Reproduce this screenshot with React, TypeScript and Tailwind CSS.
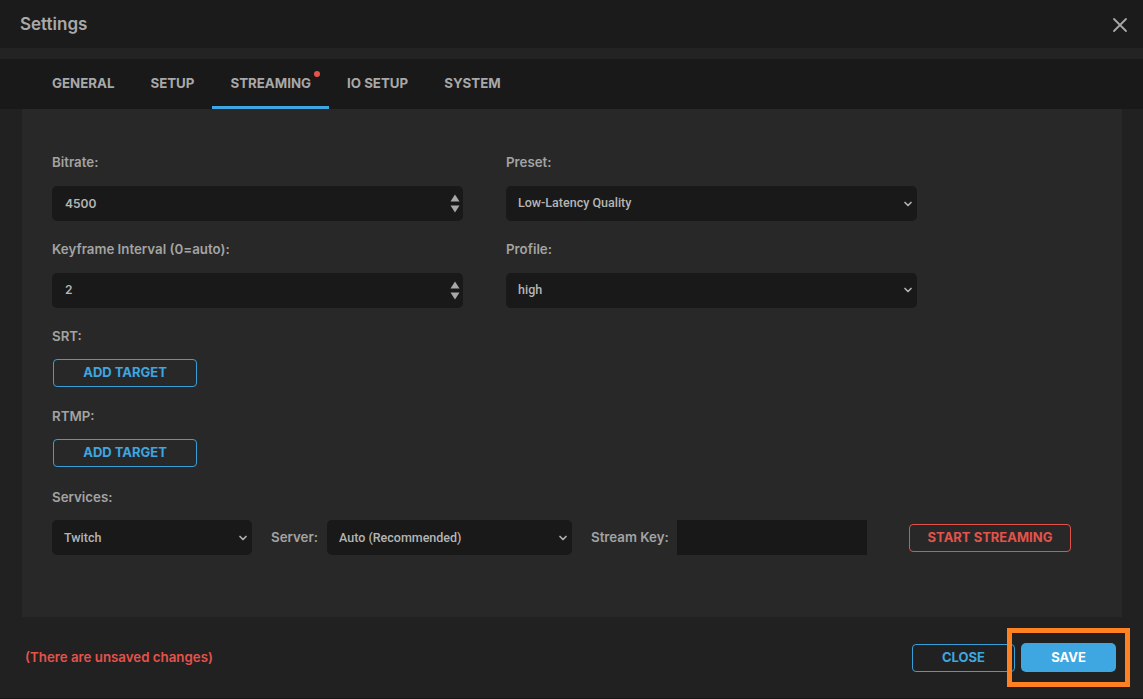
import React from "react";

const Chevron = () => (
  <svg width="10" height="10" viewBox="0 0 10 10" className="shrink-0">
    <path d="M2 3.5 L5 6.5 L8 3.5" fill="none" stroke="#b0b0b0" strokeWidth="1.7" strokeLinecap="round" strokeLinejoin="round" />
  </svg>
);

const Spinner = () => (
  <div className="flex flex-col items-center gap-[3px]">
    <svg width="10" height="8" viewBox="0 0 10 8"><path d="M5 0.5 L9.5 7.5 L0.5 7.5 Z" fill="#a8a8a8" /></svg>
    <svg width="10" height="8" viewBox="0 0 10 8"><path d="M0.5 0.5 L9.5 0.5 L5 7.5 Z" fill="#a8a8a8" /></svg>
  </div>
);

const Label = ({ children }: { children: React.ReactNode }) => (
  <div className="text-[13.3px] font-semibold text-[#a3a3a3] leading-none">{children}</div>
);

const NumberField = ({ value }: { value: string }) => (
  <div className="h-[35px] w-[411px] rounded-[5px] bg-[#191919] flex items-center justify-between pl-[13px] pr-[3px]">
    <span className="text-[12px] font-semibold text-[#b5b5b5]">{value}</span>
    <Spinner />
  </div>
);

const SelectField = ({ value, w }: { value: string; w: string }) => (
  <div className={`h-[35px] ${w} rounded-[5px] bg-[#191919] flex items-center justify-between pl-[12px] pr-[4px]`}>
    <span className="text-[12.5px] font-medium text-[#b5b5b5]" style={{ fontFamily: "Roboto, sans-serif" }}>{value}</span>
    <Chevron />
  </div>
);

const OutlineButton = ({ children, w, color }: { children: React.ReactNode; w: string; color: "blue" | "red" }) => (
  <div
    className={`h-[28px] ${w} rounded-[4px] border flex items-center justify-center text-[13px] font-bold ${
      color === "blue" ? "border-[#3a9fd8] text-[#3ea6e0]" : "border-[#e0534a] text-[#e3534b]"
    }`}
  >
    {children}
  </div>
);

export default function App() {
  const tabs = ["GENERAL", "SETUP", "STREAMING", "IO SETUP", "SYSTEM"];
  return (
    <div className="w-[1143px] h-[699px] flex flex-col bg-[#1b1b1b] overflow-hidden" style={{ fontFamily: "Inter, 'Noto Sans', sans-serif" }}>
      {/* Header */}
      <div className="h-[48px] shrink-0 flex items-center justify-between pl-[20px] pr-[15px] pt-[1px] bg-[#1b1b1b]">
        <div className="text-[17px] font-semibold text-[#a9a9a9]">Settings</div>
        <svg width="16" height="16" viewBox="0 0 16 16">
          <path d="M2 2 L14 14 M14 2 L2 14" stroke="#a8a8a8" strokeWidth="1.8" strokeLinecap="round" />
        </svg>
      </div>
      <div className="h-[11px] shrink-0 bg-[#232323]" />
      {/* Tabs */}
      <div className="h-[50px] shrink-0 bg-[#191919] flex pl-[34px]">
        {tabs.map((t) => (
          <div key={t} className="relative h-full px-[18px] pb-[1px] flex items-center">
            <span className="relative text-[13.3px] font-bold text-[#a8a8a8]">
              {t}
              {t === "STREAMING" && (
                <span className="absolute -right-[9px] -top-[3px] w-[6px] h-[6px] rounded-full bg-[#e8524a]" />
              )}
            </span>
            {t === "STREAMING" && <div className="absolute left-0 right-0 bottom-0 h-[3px] bg-[#3ea6e0]" />}
          </div>
        ))}
      </div>
      {/* Content */}
      <div className="h-[508px] shrink-0 flex bg-[#212121]">
        <div className="w-[22px] shrink-0" />
        <div className="flex-1 bg-[#282828] pl-[30px] pt-[47px] flex flex-col">
          <div className="flex gap-[43px]">
            <div className="flex flex-col">
              <Label>Bitrate:</Label>
              <div className="mt-[17px]"><NumberField value="4500" /></div>
              <div className="mt-[22px]"><Label>Keyframe Interval (0=auto):</Label></div>
              <div className="mt-[16px]"><NumberField value="2" /></div>
            </div>
            <div className="flex flex-col">
              <Label>Preset:</Label>
              <div className="mt-[17px]"><SelectField value="Low-Latency Quality" w="w-[411px]" /></div>
              <div className="mt-[22px]"><Label>Profile:</Label></div>
              <div className="mt-[16px]"><SelectField value="high" w="w-[411px]" /></div>
            </div>
          </div>
          <div className="mt-[22px]"><Label>SRT:</Label></div>
          <div className="mt-[16px] pl-[1px]"><OutlineButton w="w-[144px]" color="blue">ADD TARGET</OutlineButton></div>
          <div className="mt-[23px]"><Label>RTMP:</Label></div>
          <div className="mt-[16px] pl-[1px]"><OutlineButton w="w-[144px]" color="blue">ADD TARGET</OutlineButton></div>
          <div className="mt-[24px]"><Label>Services:</Label></div>
          <div className="mt-[16px] flex items-center">
            <SelectField value="Twitch" w="w-[200px]" />
            <span className="ml-[19px] w-[56px] text-[13.3px] font-semibold text-[#a3a3a3]">Server:</span>
            <SelectField value="Auto (Recommended)" w="w-[245px]" />
            <span className="ml-[19px] w-[86px] text-[13.3px] font-semibold text-[#a3a3a3]">Stream Key:</span>
            <div className="h-[35px] w-[190px] bg-[#181818]" />
            <div className="ml-[42px]"><OutlineButton w="w-[162px]" color="red">START STREAMING</OutlineButton></div>
          </div>
        </div>
        <div className="w-[21px] shrink-0" />
      </div>
      {/* Footer */}
      <div className="flex-1 bg-[#212121] flex items-center justify-between pl-[25px] pr-[13px] border-b border-[#161616]">
        <div className="text-[13.3px] font-semibold text-[#e5524b]">(There are unsaved changes)</div>
        <div className="flex items-center">
          <OutlineButton w="w-[103px]" color="blue">CLOSE</OutlineButton>
          <div className="ml-[-8px] border-[5px] border-[#ff8122] px-[9px] py-[10px]">
            <div className="h-[29px] w-[95px] rounded-[5px] bg-[#3ea6e0] flex items-center justify-center text-[13px] font-bold text-white">SAVE</div>
          </div>
        </div>
      </div>
    </div>
  );
}
